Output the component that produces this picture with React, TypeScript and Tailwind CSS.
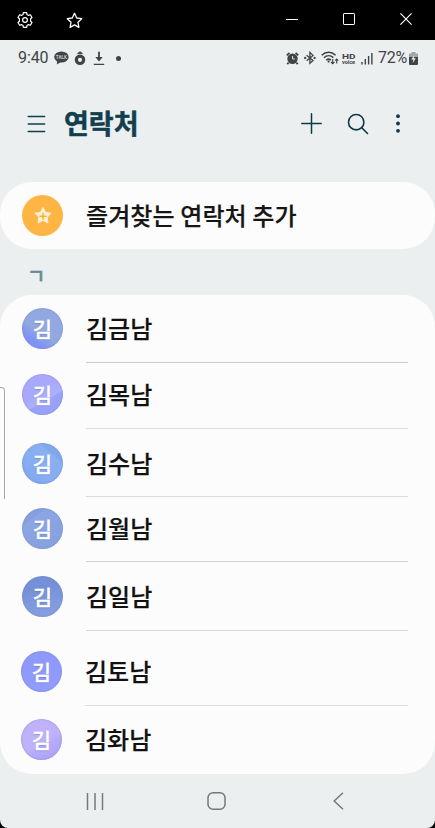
import { useState } from 'react';

type Contact = {
  name: string;
  row: string;
  avatar: string;
  line: string;
};

const contacts: Contact[] = [
  { name: '김금남', row: 'h-[68px] pt-[13px] pl-[22px]', avatar: 'bg-[linear-gradient(35deg,#7d92f5_22%,#8da3e6_38%,#91a9e0_42%)]', line: 'bg-[#cbcccd]' },
  { name: '김목남', row: 'h-[66px] pt-[11px] pl-[22px]', avatar: 'bg-[linear-gradient(150deg,#a9a9fc_45%,#aeb0fd_60%,#98a2fb_64%)]', line: 'bg-[#dcddde]' },
  { name: '김수남', row: 'h-[68px] pt-[14px] pl-[22px]', avatar: 'bg-[linear-gradient(220deg,#7fa8ec_25%,#8ab0f1_29%,#86acf2_65%,#7da4ef_100%)]', line: 'bg-[#dcddde]' },
  { name: '김월남', row: 'h-[65px] pt-[11px] pl-[22px]', avatar: 'bg-[linear-gradient(145deg,#849fdf_24%,#8ca5e3_27%,#86a1e0_100%)]', line: 'bg-[#d0d1d2]' },
  { name: '김일남', row: 'h-[69px] pt-[14px] pl-[22px]', avatar: 'bg-[linear-gradient(170deg,#7590d8_30%,#7f9add_65%,#879fe2_100%)]', line: 'bg-[#d8d9da]' },
  { name: '김토남', row: 'h-[75px] pt-[20px] pl-[21px]', avatar: 'bg-[linear-gradient(170deg,#8f99fb_40%,#929dff_100%)]', line: 'bg-[#dedfe0]' },
  { name: '김화남', row: 'h-[68px] pt-[13px] pl-[21px]', avatar: 'bg-[linear-gradient(150deg,#bfb2fb_55%,#b5aafa_65%,#ab9ff8_100%)]', line: '' },
];

function WindowBar() {
  return (
    <div className="flex h-10 items-center justify-between bg-black pl-[17px] pr-[23px] text-white">
      <div className="flex items-center gap-[33px]">
        <svg width="16" height="16" viewBox="0 0 16 16" fill="none" stroke="currentColor" strokeWidth="1.2" strokeLinejoin="round">
          <path d="M6 2.5 6.4.7h3.2l.4 1.8 1.5.9 1.9-.6 1.6 2.7-1.4 1.3v2.4l1.4 1.3-1.6 2.7-1.9-.6-1.5.9-.4 1.8H6.400L6 13.500l-1.500-.9-1.900.6L1 10.500l1.400-1.300V6.800L1 5.500l1.600-2.700 1.900.6z" />
          <circle cx="8" cy="8" r="2.4" />
        </svg>
        <svg width="17" height="17" viewBox="0 0 17 17" fill="none" stroke="currentColor" strokeWidth="1.3" strokeLinejoin="round">
          <path d="m8.5 1.3 2.2 4.7 5 .7-3.700 3.600.9 5.100-4.400-2.500-4.400 2.500.9-5.100L1.300 6.700l5-.7z" />
        </svg>
      </div>
      <div className="flex h-[38px] items-center self-start">
        <svg width="12" height="12" viewBox="0 0 12 12" stroke="currentColor" className="mr-[45px]">
          <path d="M0 6.5h12" />
        </svg>
        <svg width="12" height="12" viewBox="0 0 12 12" fill="none" stroke="currentColor" className="mr-[45px]">
          <rect x=".5" y=".5" width="11" height="11" rx=".6" />
        </svg>
        <svg width="12" height="12" viewBox="0 0 12 12" stroke="currentColor" strokeWidth="1.2">
          <path d="m.4.4 11.2 11.2M11.6.4.4 11.6" />
        </svg>
      </div>
    </div>
  );
}

function StatusBar() {
  return (
    <div className="flex h-9 items-center justify-between px-[17px] text-[#404446]">
      <div className="flex items-center">
        <span className="w-[33px] pl-px font-[Roboto] text-[16px] tracking-[-0.1px]">9:40</span>
        <svg width="15" height="14" viewBox="0 0 15 14" className="ml-[4px]">
          <ellipse cx="7.4" cy="6" rx="7.2" ry="5.5" fill="currentColor" />
          <path d="m3.2 9.5-.4 4L7 11z" fill="currentColor" />
          <text x="7.4" y="7.7" textAnchor="middle" fontSize="4.6" fontWeight="700" fontFamily="Roboto, sans-serif" fill="#c5c9cb">TALK</text>
        </svg>
        <svg width="12" height="15" viewBox="0 0 12 15" fill="none" stroke="currentColor" className="ml-[5px]">
          <circle cx="6" cy="8.8" r="3.7" strokeWidth="3.2" />
          <path d="M3.6 2.6 6 .7l2.4 1.9z" fill="currentColor" />
        </svg>
        <svg width="12" height="15" viewBox="0 0 12 15" fill="none" stroke="currentColor" className="ml-[7px]">
          <path d="M6 .8v8" strokeWidth="1.8" />
          <path d="M2.3 6h7.4L6 10.4z" fill="currentColor" stroke="none" />
          <path d="M.8 13.4h10.4" strokeWidth="1.3" />
        </svg>
        <span className="ml-[11px] size-[5px] rounded-full bg-current" />
      </div>
      <div className="flex items-center">
        <svg width="13" height="13" viewBox="0 0 13 13" className="mr-[5px]">
          <circle cx="6.5" cy="6.8" r="5.2" fill="currentColor" />
          <path d="M.8 3.3 3.4.9M12.2 3.3 9.6.9M2.6 10.6l-1.3 1.5M10.4 10.6l1.3 1.5" stroke="currentColor" strokeWidth="1.8" />
          <path d="M6.6 4v3h2.3" fill="none" stroke="#dfe3e5" strokeWidth="1" />
        </svg>
        <svg width="12" height="14" viewBox="0 0 12 14" fill="none" stroke="currentColor" strokeWidth="1.3" className="mr-[5px]">
          <path d="m2.6 4.2 6.4 5.4-3.1 2.8V1.4L9 4.4 2.6 9.7" />
          <circle cx="1.2" cy="7" r=".5" fill="currentColor" />
          <circle cx="10.6" cy="7" r=".5" fill="currentColor" />
        </svg>
        <svg width="18" height="14" viewBox="0 0 18 14" fill="none" stroke="currentColor" strokeWidth="1.5" className="mr-[3px]">
          <path d="M.7 4.3C4.8.3 10.5.3 14.6 4.3M2.9 6.8c2.9-2.7 6.7-2.7 9.5-.2M5.2 9.2c1.500-1.300 3.300-1.300 4.700-.1" />
          <path d="M7.6 9.4v2" strokeWidth="1.8" />
          <path d="M11.7 8v4.7m-1.7-1.7 1.7 1.8 1.7-1.8M15.7 12.5V8m-1.600 1.700L15.700 8l1.600 1.700" strokeWidth="1.1" />
        </svg>
        <svg width="14" height="13" viewBox="0 0 14 13" fill="currentColor" fontFamily="Roboto, sans-serif" className="mr-[5px]">
          <text x="0" y="6.5" fontSize="8" fontWeight="700" textLength="13.5" lengthAdjust="spacingAndGlyphs">HD</text>
          <text x="0" y="12.4" fontSize="5.4" fontWeight="700" textLength="13" lengthAdjust="spacingAndGlyphs">voice</text>
        </svg>
        <svg width="12" height="13" viewBox="0 0 12 13" stroke="currentColor" strokeWidth="1.4" className="mr-[5px]">
          <path d="M1 10v2.5M4.3 7v5.5M7.6 4v8.5M10.9 1v11.5" />
        </svg>
        <span className="w-[29px] whitespace-nowrap font-[Roboto] text-[16px] tracking-[-0.3px]">72%</span>
        <svg width="9" height="13" viewBox="0 0 9 13" className="ml-[2px]">
          <path d="M2.5 0h4v1.5H9V6H0V1.5h2.5z" fill="#a1a5a6" />
          <path d="M0 5h9v7a1 1 0 0 1-1 1H1a1 1 0 0 1-1-1z" fill="currentColor" />
          <path d="M5.4 3 2.3 7.5h2L3.7 11l3.1-4.7h-2z" fill="#ebeff1" />
        </svg>
      </div>
    </div>
  );
}

function Header() {
  return (
    <header className="flex h-[106px] items-center pb-[11px] pl-[27px] text-[#113f4e]">
      <button type="button" aria-label="메뉴">
        <svg width="19" height="18" viewBox="0 0 19 18" stroke="currentColor" strokeWidth="1.5" strokeLinecap="round">
          <path d="M1.2 1.5h16.5M1.2 9h16.5M1.2 16.5h16.5" />
        </svg>
      </button>
      <h1 className="ml-[18px] w-[76px] whitespace-nowrap pb-[2px] text-[27px] font-bold leading-none [-webkit-text-stroke:0.5px_#113f4e]">연락처</h1>
      <div className="ml-[161px] flex items-center text-[#0d3947]">
        <svg width="21" height="21" viewBox="0 0 21 21" stroke="currentColor" strokeWidth="1.5" strokeLinecap="round">
          <path d="M10.5.8v19.4M.8 10.5h19.4" />
        </svg>
        <svg width="22" height="22" viewBox="0 0 22 22" fill="none" stroke="currentColor" strokeWidth="1.6" strokeLinecap="round" className="ml-[25px]">
          <circle cx="9.2" cy="9.2" r="7.7" />
          <path d="m14.8 14.8 5.7 5.7" />
        </svg>
        <svg width="4" height="19" viewBox="0 0 4 19" fill="currentColor" className="ml-[27px]">
          <circle cx="2" cy="2.2" r="1.9" />
          <circle cx="2" cy="9.5" r="1.9" />
          <circle cx="2" cy="16.8" r="1.9" />
        </svg>
      </div>
    </header>
  );
}

function ContactRow({ contact, onSelect }: { contact: Contact; onSelect: () => void }) {
  return (
    <li className={`flex flex-col pr-[27px] ${contact.row}`}>
      <button type="button" onClick={onSelect} className="flex items-center text-left">
        <span className={`flex size-[41px] items-center justify-center rounded-full text-[21px] font-medium leading-none text-white shadow-[inset_0_0_1px_1px_#6c80bd40] [-webkit-text-stroke:0.3px_white] [text-shadow:0_1px_1px_#4d5f9966] ${contact.avatar}`}>
          김
        </span>
        <span className="ml-[23px] whitespace-nowrap pb-px text-[24px] font-medium leading-none text-[#111] [-webkit-text-stroke:0.2px_#111]">{contact.name}</span>
      </button>
      {contact.line && <div className={`ml-[64px] mt-auto h-px ${contact.line}`} />}
    </li>
  );
}

function NavigationBar() {
  return (
    <nav className="flex h-[54px] items-center pl-[86px] text-[#76797b]">
      <svg width="18" height="17" viewBox="0 0 18 17" stroke="currentColor" strokeWidth="1.5">
        <path d="M1.5 0v17M9 0v17M16.5 0v17" />
      </svg>
      <svg width="19" height="18" viewBox="0 0 19 18" fill="none" stroke="currentColor" strokeWidth="1.5" className="ml-[103px]">
        <rect x="1" y=".8" width="17" height="16.4" rx="5" />
      </svg>
      <svg width="11" height="18" viewBox="0 0 11 18" fill="none" stroke="currentColor" strokeWidth="1.5" className="ml-[107px]">
        <path d="M10 .8 1.2 9l8.8 8.2" />
      </svg>
    </nav>
  );
}

export default function App() {
  const [, setSelected] = useState<string | null>(null);

  return (
    <div className="h-[828px] w-[435px] overflow-hidden bg-black font-['Noto_Sans_CJK_KR',sans-serif]">
      <WindowBar />
      <main className="relative h-[788px] overflow-hidden rounded-b-[8px] bg-[#ebeff0]">
        <StatusBar />
        <Header />
        <button type="button" className="flex h-[67px] w-full items-center rounded-[32px] bg-[#fcfcfc] pl-[22px] text-left">
          <span className="flex size-[41px] items-center justify-center rounded-full bg-[#ffb544]">
            <svg width="20" height="19" viewBox="0 0 20 19">
              <path d="m10 1.3 2.5 5.2 5.7.8-4.2 4 1 5.8-5-2.8-5 2.8 1-5.8-4.2-4 5.7-.8z" fill="#fff0d0" stroke="#fff0d0" strokeLinejoin="round" />
              <path d="M10 6.8v7M6.5 10.3h7" stroke="#f3ad42" strokeWidth="1.4" />
            </svg>
          </span>
          <span className="ml-[23px] whitespace-nowrap pb-[2px] text-[24px] font-medium leading-none tracking-[0.1px] text-[#151515] [-webkit-text-stroke:0.2px_#151515]">즐겨찾는 연락처 추가</span>
        </button>
        <h2 className="flex h-[46px] items-center pl-[27px] pt-[7px] text-[20px] font-medium leading-none text-[#638b95] [-webkit-text-stroke:0.4px_#638b95]">ㄱ</h2>
        <ul className="h-[479px] rounded-[32px] bg-[#fcfcfc]">
          {contacts.map((contact) => (
            <ContactRow key={contact.name} contact={contact} onSelect={() => setSelected(contact.name)} />
          ))}
        </ul>
        <NavigationBar />
        {/* edge panel handle */}
        <div className="absolute left-0 top-[347px] h-[112px] w-[5px] rounded-tr-[4px] border-r border-t border-[#a5a6a7]" />
      </main>
    </div>
  );
}
